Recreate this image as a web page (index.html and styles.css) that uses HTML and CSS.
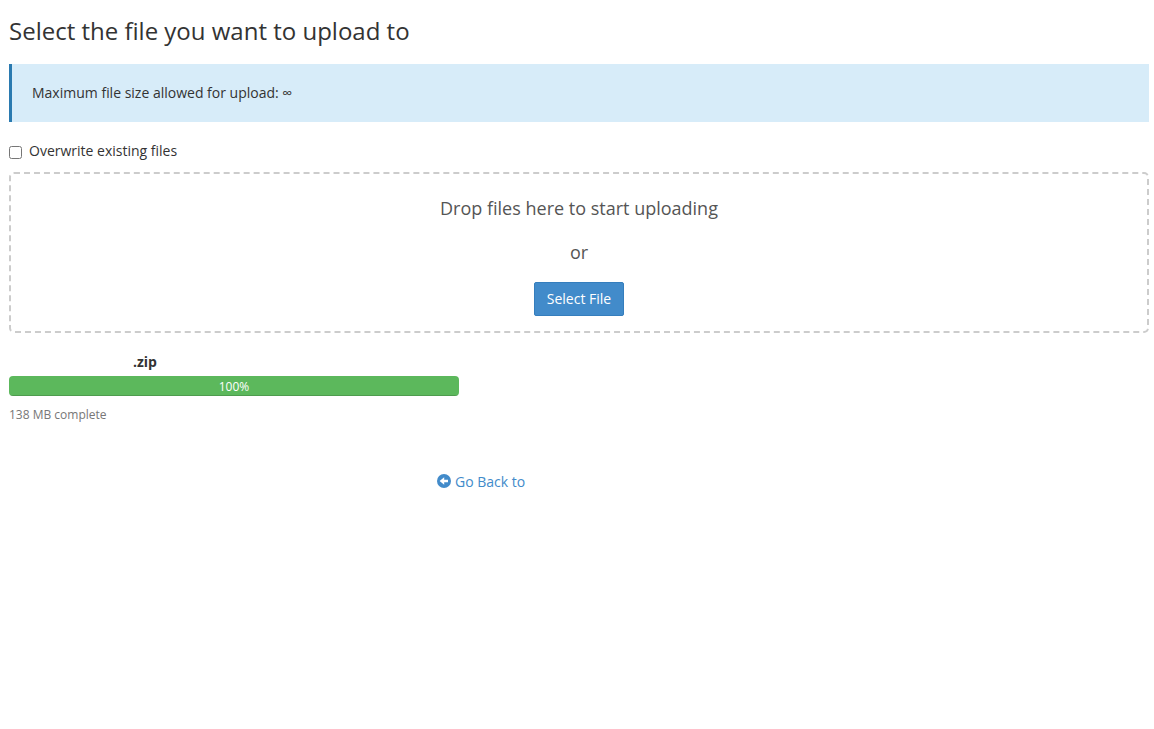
FILE: index.html
```html
<!DOCTYPE html>
<html lang="en">

<head>
    <meta charset="UTF-8">
    <meta name="viewport" content="width=device-width, initial-scale=1.0">
    <title>Upload Files</title>
    <link rel="stylesheet" href="styles.css">
</head>

<body>
    <h1>Select the file you want to upload to</h1>
    <div class="callout">Maximum file size allowed for upload: ∞</div>

    <div class="checkbox">
        <input type="checkbox" id="overwrite">
        <label for="overwrite">Overwrite existing files</label>
    </div>

    <div class="drop-zone">
        <p>Drop files here to start uploading</p>
        <p>or</p>
        <button type="button" class="btn">Select File</button>
    </div>

    <div class="upload">
        <div class="file-name">.zip</div>
        <div class="progress">
            <div class="progress-bar" style="width: 100%">100%</div>
        </div>
        <div class="status">138 MB complete</div>
    </div>

    <div class="footer">
        <a href="#" class="back-link">
            <svg class="icon" viewBox="0 0 14 14" aria-hidden="true">
                <circle cx="7" cy="7" r="7" fill="currentColor" />
                <path d="M2.6 7L7.2 3.2v2.5H11v2.6H7.2v2.5z" fill="#fff" />
            </svg>
            Go Back to
        </a>
    </div>
</body>

</html>
```
FILE: styles.css
```css
* {
    box-sizing: border-box;
}

body {
    margin: 0;
    padding: 16px 5px 0 9px;
    background-color: #fff;
    color: #333;
    font-family: "Open Sans", sans-serif;
    font-size: 14px;
    line-height: 20px;
}

h1 {
    margin: 0 0 18px;
    font-size: 24px;
    font-weight: 400;
    line-height: 30px;
}

.callout {
    padding: 19px 20px;
    border-left: 3px solid #2a7ab0;
    background-color: #d7ecf9;
}

.checkbox {
    display: flex;
    align-items: center;
    margin: 19px 0 11px;
}

.checkbox input {
    width: 13px;
    height: 13px;
    margin: 2px 7px 0 0;
}

.drop-zone {
    padding: 22px 20px 15px;
    border: 2px dashed #ccc;
    border-radius: 5px;
    color: #555;
    font-size: 18px;
    text-align: center;
}

.drop-zone p {
    margin: 0;
    line-height: 24px;
}

.drop-zone p + p {
    margin: 20px 0 18px;
}

.btn {
    display: block;
    height: 34px;
    margin: 0 auto;
    padding: 0 12px 2px;
    border: 1px solid #357ebd;
    border-radius: 2px;
    background-color: #428bca;
    color: #fff;
    font-family: inherit;
    font-size: 14px;
    cursor: pointer;
}

.upload {
    max-width: 450px;
    margin-top: 19px;
}

.file-name {
    padding-left: 124px;
    font-weight: 700;
}

.progress {
    height: 20px;
    margin: 4px 0 9px;
    overflow: hidden;
    border-radius: 4px;
    background-color: #f5f5f5;
}

.progress-bar {
    height: 100%;
    background-color: #5cb85c;
    box-shadow: inset 0 -1px 0 rgba(0, 0, 0, 0.15);
    color: #fff;
    font-size: 12px;
    line-height: 22px;
    text-align: center;
}

.status {
    color: #777;
    font-size: 12px;
}

.footer {
    margin-top: 47px;
    padding-left: 428px;
}

.back-link {
    display: inline-flex;
    align-items: center;
    gap: 4px;
    color: #428bca;
    text-decoration: none;
}

.icon {
    width: 14px;
    height: 14px;
    margin-bottom: 2px;
}
```
